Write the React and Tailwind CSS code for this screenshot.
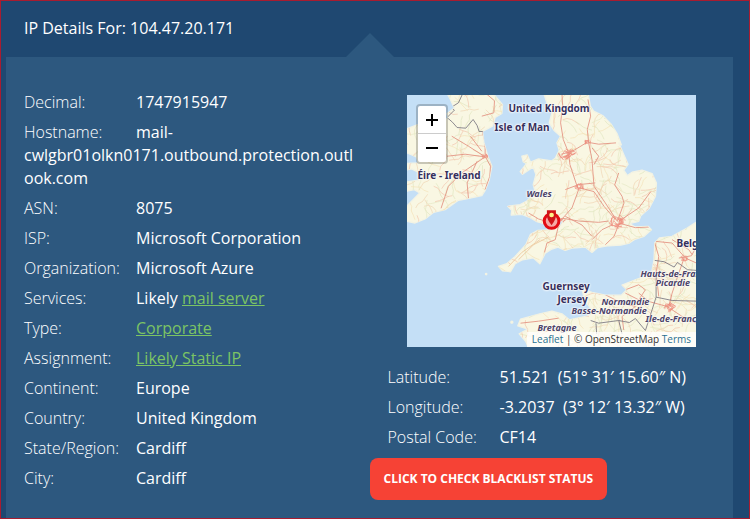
import React from "react";

const details = [
  { label: "Decimal:", value: "1747915947" },
  { label: "Hostname:", value: "mail-cwlgbr01olkn0171.outbound.protection.outlook.com" },
  { label: "ASN:", value: "8075" },
  { label: "ISP:", value: "Microsoft Corporation" },
  { label: "Organization:", value: "Microsoft Azure" },
  { label: "Services:", value: "Likely ", link: "mail server" },
  { label: "Type:", link: "Corporate" },
  { label: "Assignment:", link: "Likely Static IP" },
  { label: "Continent:", value: "Europe" },
  { label: "Country:", value: "United Kingdom" },
  { label: "State/Region:", value: "Cardiff" },
  { label: "City:", value: "Cardiff" },
];

const position = [
  { label: "Latitude:", value: "51.521\u00a0 (51° 31′ 15.60″ N)" },
  { label: "Longitude:", value: "-3.2037\u00a0 (3° 12′ 13.32″ W)" },
  { label: "Postal Code:", value: "CF14" },
];

const britain =
  "M415 0L425 30L440 60L432 90L446 112L466 130L455 150L462 172L450 196L440 204L400 198L376 208L366 186L350 190L354 206L364 212L345 236L352 244L384 222L392 245L384 275L391 300L365 324L345 335L308 340L320 352L318 366L350 364L375 374L395 386L420 393L440 396L464 386L478 378L466 396L445 410L398 412L376 424L362 455L330 490L305 512L280 520L292 533L316 536L330 512L352 500L384 494L404 512L420 480L440 468L458 462L480 472L500 465L540 462L560 478L576 464L610 458L646 456L672 450L690 438L716 430L738 410L728 400L690 402L672 392L700 385L706 368L732 345L750 310L753 270L740 242L710 232L680 238L666 248L655 232L668 214L655 185L640 150L648 156L635 122L618 95L592 68L565 55L555 40L548 0Z";
const ireland =
  "M125 0L262 0L292 36L290 62L270 74L262 100L232 116L236 148L248 190L260 220L252 262L240 292L230 308L184 318L160 322L120 350L86 358L60 378L30 390L0 384L0 345L44 300L28 290L0 296L0 268L40 262L44 240L20 228L0 232L0 212L40 210L34 192L6 180L6 108L36 96L60 100L130 76L126 62L148 46L136 20Z";
const france =
  "M880 382L845 405L800 430L762 435L748 450L746 500L738 542L690 560L650 576L664 590L648 606L600 606L560 598L530 588L538 620L556 646L548 668L492 680L470 662L440 654L404 662L346 678L338 698L368 708L342 722L362 745L372 770L880 770Z";

const motorways = [
  "M470 0L472 40L466 90L474 140L490 180L494 215L512 270L520 290L500 345L472 376L440 384",
  "M548 20L556 70L546 110L550 150L560 200L566 280L600 330L636 385",
  "M468 184L500 176L546 148L580 154L632 150",
  "M520 284L566 296L596 340L630 380",
  "M472 376L520 384L580 388L610 384",
  "M472 384L458 405L450 440L425 450L418 478",
  "M560 440L590 410L620 396",
  "M560 165L580 190L566 215",
  "M636 385L656 330L650 310L628 276L640 240",
  "M640 385L700 345L736 296",
  "M640 390L690 404L730 402",
  "M640 395L626 430L600 455",
  "M370 360L400 378L440 390L472 378",
  "M480 290L520 275L570 270",
  "M480 370L530 396L560 430",
  "M240 0L268 24L266 60L230 70",
  "M232 116L240 150L240 190L256 220L254 250L240 290",
  "M240 192L190 160L140 130",
  "M240 192L180 184L126 190",
  "M240 192L170 240L130 280L108 346",
  "M216 205L186 270L190 316",
  "M230 175L196 130",
  "M748 450L760 490L752 540L760 610",
  "M750 445L800 450L840 495L873 510",
  "M800 440L850 470L860 485",
  "M820 495L858 488L873 460",
  "M660 590L700 575L720 590L700 620L660 600",
  "M700 600L730 625L785 640",
  "M600 605L650 630L690 640L650 670L655 710",
  "M785 640L830 670L873 690",
  "M790 640L800 600L820 540L836 495",
  "M346 690L400 684L460 675",
];

const cities = [
  { x: 480, y: 184, r: 20 },
  { x: 522, y: 282, r: 14 },
  { x: 636, y: 386, r: 24 },
  { x: 546, y: 148, r: 11 },
  { x: 240, y: 190, r: 10 },
  { x: 792, y: 642, r: 18 },
  { x: 474, y: 380, r: 8 },
  { x: 836, y: 496, r: 12 },
  { x: 500, y: 178, r: 12 },
];

const borders = [
  "M174 0L160 30L138 44L148 52L126 74L142 88L156 104L182 106L204 80L216 98L222 116L244 116",
  "M748 502L776 506L806 522L816 508L846 530L873 532",
  "M752 545L752 612L800 622L873 624",
  "M556 682L580 690L640 682L672 688L690 676L720 712L740 650L752 612",
  "M572 690L574 722M640 682L650 722",
];

function createRandom(seed) {
  let state = seed;
  return () => {
    state = (state * 16807) % 2147483647;
    return state / 2147483647;
  };
}

function createMinorRoads() {
  const random = createRandom(71);
  const roads = [];
  for (let i = 0; i < 900; i += 1) {
    let x = random() * 880;
    let y = random() * 770;
    let angle = random() * Math.PI * 2;
    let d = `M${x.toFixed(0)} ${y.toFixed(0)}`;
    for (let j = 0; j < 4; j += 1) {
      angle += (random() - 0.5) * 1.3;
      x += Math.cos(angle) * 14;
      y += Math.sin(angle) * 14;
      d += `L${x.toFixed(0)} ${y.toFixed(0)}`;
    }
    roads.push(d);
  }
  return roads;
}

function createCityStreets() {
  const random = createRandom(19);
  return cities.map(({ x, y, r }) => {
    let d = "";
    for (let i = 0; i < r; i += 1) {
      const a = random() * Math.PI * 2;
      const b = a + 1 + random();
      const p = r * (0.4 + random() * 0.7);
      d += `M${(x + Math.cos(a) * p).toFixed(0)} ${(y + Math.sin(a) * p * 0.8).toFixed(0)}L${(x + Math.cos(b) * p).toFixed(0)} ${(y + Math.sin(b) * p * 0.8).toFixed(0)}`;
    }
    return d;
  });
}

const minorRoads = createMinorRoads();
const cityStreets = createCityStreets();
const roadColors = ["#e6e9c4", "#f3c4ac", "#f4e2b8", "#dfe6c0", "#f0d4b4"];

function MapDrawing() {
  return (
    <svg viewBox="6 6 867 756" preserveAspectRatio="xMidYMid slice" className="block h-full w-full" aria-hidden="true">
      <defs>
        <clipPath id="land">
          <path d={britain} />
          <path d={ireland} />
          <path d={france} />
        </clipPath>
      </defs>
      <rect width="880" height="770" fill="#c4dff6" />
      <g fill="#f9f7e3" stroke="#f3f3e4" strokeWidth="4" strokeLinejoin="round">
        <path d={britain} />
        <path d={ireland} />
        <path d={france} />
        <circle cx="243" cy="543" r="2" />
        <circle cx="320" cy="687" r="3" />
      </g>
      <g clipPath="url(#land)" fill="none" strokeLinejoin="round">
        <g strokeWidth="2">
          {minorRoads.map((d, i) => (
            <path key={i} d={d} stroke={roadColors[i % 5]} />
          ))}
        </g>
        <g stroke="#e28f7e" strokeWidth="2.8" opacity="0.9">
          {motorways.map((d) => (
            <path key={d} d={d} />
          ))}
        </g>
        <g stroke="#ee9080" strokeWidth="2">
          {cityStreets.map((d, i) => (
            <path key={i} d={d} />
          ))}
        </g>
        <g stroke="#77737e" strokeWidth="2.5">
          {borders.map((d) => (
            <path key={d} d={d} />
          ))}
        </g>
        <path d="M404 440L350 478L310 520M430 432L385 455L340 500" stroke="#ecc79c" strokeWidth="2.5" />
      </g>
      <g>
        <circle cx="439" cy="384" r="22" fill="#f5a9a5" stroke="#e30b13" strokeWidth="9" />
        <path d="M425 352H452V368Q452 378 439 397Q425 378 425 368Z" fill="#cf1418" />
        <circle cx="439" cy="366" r="7" fill="#fff08a" />
      </g>
    </svg>
  );
}

const halo = "[text-shadow:0_0_2px_#fff,0_0_2px_#fff,0_0_3px_#fff]";
const place = `absolute whitespace-nowrap text-[10px] leading-4 font-bold text-[#36305c] ${halo}`;
const region = `absolute whitespace-nowrap text-[9px] leading-4 font-bold italic text-[#4d4468] ${halo}`;

function LocationMap() {
  return (
    <div className="relative mx-[19px] mt-1 h-[252px] overflow-hidden bg-[#c4dff6] font-['Noto_Sans',sans-serif]">
      <MapDrawing />
      <span className={`${place} left-[102px] top-[5px]`}>United Kingdom</span>
      <span className={`${place} left-[88px] top-[24px]`}>Isle of Man</span>
      <span className={`${place} left-[11px] top-[72px]`}>Éire - Ireland</span>
      <span className={`${region} left-[120px] top-[91px]`}>Wales</span>
      <span className={`${place} left-[136px] top-[183px]`}>Guernsey</span>
      <span className={`${place} left-[151px] top-[196px]`}>Jersey</span>
      <span className={`${place} left-[270px] top-[140px]`}>Belgique</span>
      <span className={`${region} left-[234px] top-[171px]`}>Hauts-de-France</span>
      <span className={`${region} left-[249px] top-[180px]`}>Picardie</span>
      <span className={`${region} left-[195px] top-[199px]`}>Normandie</span>
      <span className={`${region} left-[165px] top-[208px]`}>Basse-Normandie</span>
      <span className={`${region} left-[239px] top-[216px]`}>Ile-de-France</span>
      <span className={`${region} left-[131px] top-[225px]`}>Bretagne</span>

      <div className="absolute left-[9px] top-[9px] flex w-8 flex-col overflow-hidden rounded-sm border-2 border-black/20 bg-white bg-clip-padding">
        <button type="button" aria-label="Zoom in" className="flex h-7 items-center justify-center border-b border-[#ccc]">
          <svg viewBox="0 0 12 12" className="size-3" stroke="#000" strokeWidth="2">
            <path d="M6 0V12M0 6H12" />
          </svg>
        </button>
        <button type="button" aria-label="Zoom out" className="flex h-7 items-center justify-center">
          <svg viewBox="0 0 12 12" className="size-3" stroke="#000" strokeWidth="2">
            <path d="M0 6H12" />
          </svg>
        </button>
      </div>

      <div className="absolute right-0 bottom-0 bg-white/75 px-[5px] font-['Open_Sans',sans-serif] text-[10px] leading-[15px] text-[#333]">
        <a href="#leaflet" className="text-[#2a7090]">Leaflet</a> | © OpenStreetMap{" "}
        <a href="#terms" className="text-[#2a7090]">Terms</a>
      </div>
    </div>
  );
}

function Row({ label, value, link }) {
  return (
    <div className="break-words">
      <dt className="inline-block w-28 font-light">{label}</dt>
      <dd className="inline">
        {value}
        {link && (
          <a href="#details" className="text-[#7cc464] underline">
            {link}
          </a>
        )}
      </dd>
    </div>
  );
}

export default function App() {
  return (
    <div className="flex min-h-screen flex-col border border-[#a81c30] bg-[#1f4871] font-['Open_Sans',sans-serif] text-base leading-[23px] text-white">
      <h1 className="px-[23px] pt-4 pb-[17px]">IP Details For: 104.47.20.171</h1>
      <main className="relative mr-4 ml-[5px] grid flex-1 grid-cols-2 bg-[#2d587f] pt-[34px] pb-[17px]">
        <svg viewBox="0 0 48 24" className="absolute -top-6 left-1/2 h-6 w-12 -translate-x-1/2" aria-hidden="true">
          <path d="M24 0L48 24H0Z" fill="#2d587f" />
        </svg>
        <dl className="flex min-w-0 flex-col gap-[7px] pr-3 pl-[18px]">
          {details.map((item) => (
            <Row key={item.label} {...item} />
          ))}
        </dl>
        <section className="flex min-w-0 flex-col pr-[18px]">
          <div className="pl-[18px]">
            <LocationMap />
            <dl className="flex flex-col gap-[7px] pt-[19px]">
              {position.map((item) => (
                <Row key={item.label} {...item} />
              ))}
            </dl>
          </div>
          <button type="button" className="mt-[9px] h-[42px] self-start rounded-lg bg-[#f64235] px-3.5 text-xs font-bold">
            CLICK TO CHECK BLACKLIST STATUS
          </button>
        </section>
      </main>
    </div>
  );
}
